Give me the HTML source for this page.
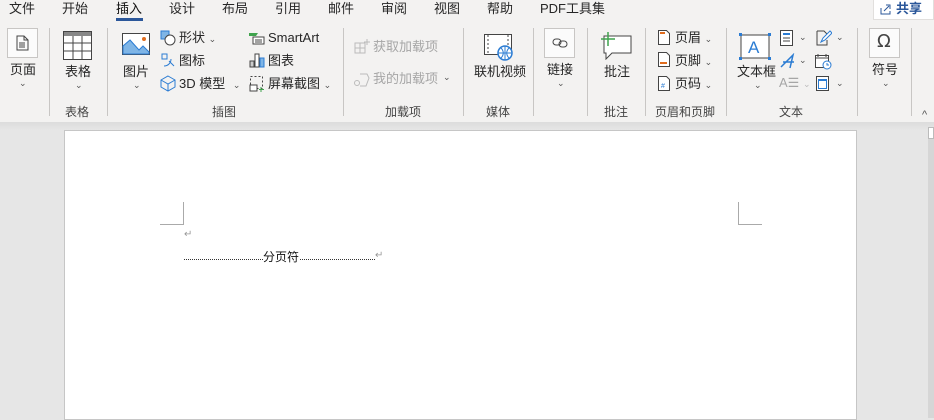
<!DOCTYPE html>
<html><head><meta charset="utf-8"><style>
*{margin:0;padding:0;box-sizing:border-box}
body{width:934px;height:418px;overflow:hidden;background:#e6e6e6;font-family:"Liberation Sans","Noto Sans CJK SC",sans-serif;color:#262626;position:relative}
.a{position:absolute;white-space:nowrap}
.t{font-size:13px;top:0;line-height:17px}
.r{font-size:12px;line-height:16px}
.sep{position:absolute;top:28px;width:1px;height:88px;background:#c8c6c4}
.gl{position:absolute;top:104px;font-size:12px;line-height:16px;color:#444}
.chev{font-size:9px;color:#555}
svg{position:absolute}
.dis{color:#a6a6a6}
</style></head><body>
<div class="a" style="left:0;top:0;width:934px;height:122px;background:#f3f2f1"></div>
<div class="a" style="left:0;top:122px;width:934px;height:8px;background:linear-gradient(#dcdcdc,#e6e6e6)"></div>
<!-- tabs -->
<div class="a t" style="left:9px">文件</div>
<div class="a t" style="left:62px">开始</div>
<div class="a t" style="left:116px;color:#111">插入</div>
<div class="a" style="left:116px;top:18px;width:27px;height:3px;background:#2b579a"></div>
<div class="a t" style="left:169px">设计</div>
<div class="a t" style="left:222px">布局</div>
<div class="a t" style="left:275px">引用</div>
<div class="a t" style="left:328px">邮件</div>
<div class="a t" style="left:381px">审阅</div>
<div class="a t" style="left:434px">视图</div>
<div class="a t" style="left:487px">帮助</div>
<div class="a t" style="left:540px">PDF工具集</div>
<div class="a" style="left:873px;top:0;width:61px;height:20px;background:#fff;border:1px solid #e1dfdd;border-top:0"></div>
<svg style="left:880px;top:3px" width="12" height="12" viewBox="0 0 12 12"><path d="M1 5v6h9V8M4 8l5-5M6 2h4v4" fill="none" stroke="#2b579a"/></svg>
<div class="a" style="left:896px;top:0;font-size:13px;line-height:17px;color:#2b579a;font-weight:bold">共享</div>
<!-- separators -->
<div class="sep" style="left:49px"></div><div class="sep" style="left:107px"></div><div class="sep" style="left:343px"></div><div class="sep" style="left:463px"></div><div class="sep" style="left:533px"></div><div class="sep" style="left:587px"></div><div class="sep" style="left:645px"></div><div class="sep" style="left:726px"></div><div class="sep" style="left:857px"></div><div class="sep" style="left:911px"></div>
<!-- 页面 -->
<div class="a" style="left:7px;top:28px;width:31px;height:30px;background:#fbfbfb;border:1px solid #c8c6c4"></div>
<svg style="left:16px;top:35px" width="13" height="16" viewBox="0 0 13 16"><path d="M1 1h7l4 4v10H1z M8 1v4h4 M3 8h6M3 10h6M3 12h6" fill="none" stroke="#444"/></svg>
<div class="a r" style="left:10px;top:62px;font-size:13px">页面</div>
<div class="a chev" style="left:19px;top:78px">⌄</div>
<!-- 表格 -->
<svg style="left:63px;top:31px" width="29" height="29" viewBox="0 0 29 29"><rect x=".5" y=".5" width="28" height="28" fill="#fff" stroke="#444"/><rect x="1" y="1" width="27" height="4" fill="#888"/><path d="M10 5v24M19 5v24M1 12h27M1 20h27" stroke="#444"/></svg>
<div class="a r" style="left:65px;top:64px;font-size:13px">表格</div>
<div class="a chev" style="left:75px;top:80px">⌄</div>
<div class="gl" style="left:65px">表格</div>
<!-- 插图 -->
<svg style="left:122px;top:33px" width="28" height="22" viewBox="0 0 28 22"><rect x=".5" y=".5" width="27" height="21" fill="#fff" stroke="#444"/><path d="M1 21V13l7-6 9 10 4-4 6 6v2z" fill="#7fb5e6" stroke="#2b7cd3"/><circle cx="22" cy="6" r="2" fill="#e06c1e"/></svg>
<div class="a r" style="left:123px;top:64px;font-size:13px">图片</div>
<div class="a chev" style="left:133px;top:80px">⌄</div>
<svg style="left:160px;top:30px" width="16" height="16" viewBox="0 0 16 16"><rect x="1" y="1" width="8" height="8" fill="#7fb5e6" stroke="#2b7cd3"/><circle cx="10" cy="10" r="5" fill="#fff" stroke="#444"/></svg>
<div class="a r" style="left:179px;top:30px;font-size:13px">形状 <span class="chev">⌄</span></div>
<svg style="left:160px;top:52px" width="16" height="16" viewBox="0 0 16 16"><path d="M2 2h5v5H2zM9 9l5 5M4 14c4 0 7-3 7-7" fill="none" stroke="#2b7cd3"/></svg>
<div class="a r" style="left:179px;top:53px;font-size:13px">图标</div>
<svg style="left:160px;top:75px" width="16" height="17" viewBox="0 0 16 17"><path d="M8 1l7 4v7l-7 4-7-4V5zM1 5l7 4 7-4M8 9v7" fill="none" stroke="#2b7cd3"/></svg>
<div class="a r" style="left:179px;top:76px;font-size:13px">3D 模型 <span class="chev" style="margin-left:4px">⌄</span></div>
<svg style="left:248px;top:31px" width="17" height="14" viewBox="0 0 17 14"><path d="M1 2h9l-2 3H1z" fill="#3fa34d"/><rect x="5" y="6" width="11" height="7" fill="#fff" stroke="#444"/><path d="M7 9h7M7 11h7" stroke="#444"/></svg>
<div class="a r" style="left:268px;top:30px;font-size:13px">SmartArt</div>
<svg style="left:249px;top:52px" width="16" height="16" viewBox="0 0 16 16"><rect x="1" y="9" width="4" height="6" fill="#ccc" stroke="#444"/><rect x="6" y="2" width="4" height="13" fill="#fff" stroke="#444"/><rect x="11" y="6" width="4" height="9" fill="#7fb5e6" stroke="#2b7cd3"/></svg>
<div class="a r" style="left:268px;top:53px;font-size:13px">图表</div>
<svg style="left:249px;top:75px" width="16" height="17" viewBox="0 0 16 17"><rect x="1.5" y="1.5" width="12" height="12" fill="none" stroke="#444" stroke-dasharray="2 2"/><rect x="1" y="10" width="7" height="6" fill="#fff" stroke="#444"/><path d="M12 12v5M10 14.5h5" stroke="#3fa34d"/></svg>
<div class="a r" style="left:268px;top:76px;font-size:13px">屏幕截图 <span class="chev">⌄</span></div>
<div class="gl" style="left:212px">插图</div>
<!-- 加载项 -->
<svg style="left:354px;top:38px" width="16" height="16" viewBox="0 0 16 16"><path d="M1 5h10v10H1zM6 5v10M1 10h10M13 1v6M10 4h6" fill="none" stroke="#bbb"/></svg>
<div class="a r dis" style="left:373px;top:39px;font-size:13px">获取加载项</div>
<svg style="left:354px;top:71px" width="16" height="16" viewBox="0 0 16 16"><circle cx="3" cy="12" r="2.5" fill="none" stroke="#bbb"/><path d="M6 3h7l2 4-3 8H6" fill="none" stroke="#bbb"/></svg>
<div class="a r dis" style="left:373px;top:71px;font-size:13px">我的加载项</div>
<div class="a chev" style="left:443px;top:72px">⌄</div>
<div class="gl" style="left:385px">加载项</div>
<!-- 媒体 -->
<svg style="left:484px;top:34px" width="30" height="28" viewBox="0 0 30 28"><rect x=".5" y=".5" width="27" height="20" fill="#fff" stroke="#444"/><path d="M4 1v19M24 1v19" stroke="#444" stroke-dasharray="2 2"/><circle cx="21" cy="19" r="7" fill="#fff" stroke="#2b7cd3" stroke-width="1.5"/><path d="M14 19h14M21 12v14M17 14c3 3 3 7 0 10M25 14c-3 3-3 7 0 10" fill="none" stroke="#2b7cd3"/></svg>
<div class="a r" style="left:474px;top:64px;font-size:13px">联机视频</div>
<div class="gl" style="left:486px">媒体</div>
<!-- 链接 -->
<div class="a" style="left:544px;top:28px;width:31px;height:30px;background:#fbfbfb;border:1px solid #c8c6c4"></div>
<svg style="left:552px;top:37px" width="16" height="12" viewBox="0 0 16 12"><rect x="1" y="2" width="8" height="6" rx="3" fill="none" stroke="#444"/><rect x="7" y="4" width="8" height="6" rx="3" fill="none" stroke="#444"/></svg>
<div class="a r" style="left:547px;top:62px;font-size:13px">链接</div>
<div class="a chev" style="left:557px;top:78px">⌄</div>
<!-- 批注 -->
<svg style="left:600px;top:31px" width="32" height="29" viewBox="0 0 32 29"><path d="M4 5h27v17H12l-6 6v-6H4z" fill="#fff" stroke="#444"/><path d="M8 1v14M1 8h14" stroke="#3fa34d" stroke-width="1.5"/></svg>
<div class="a r" style="left:604px;top:64px;font-size:13px">批注</div>
<div class="gl" style="left:604px">批注</div>
<!-- 页眉页脚 -->
<svg style="left:658px;top:30px" width="12" height="15" viewBox="0 0 12 15"><path d="M.5.5h8l3 3v11H.5z" fill="#fff" stroke="#444"/><path d="M2 3h5" stroke="#e06c1e" stroke-width="2"/></svg>
<div class="a r" style="left:675px;top:30px;font-size:13px">页眉 <span class="chev">⌄</span></div>
<svg style="left:658px;top:52px" width="12" height="15" viewBox="0 0 12 15"><path d="M.5.5h8l3 3v11H.5z" fill="#fff" stroke="#444"/><path d="M2 11h7" stroke="#e06c1e" stroke-width="2"/></svg>
<div class="a r" style="left:675px;top:53px;font-size:13px">页脚 <span class="chev">⌄</span></div>
<svg style="left:658px;top:76px" width="12" height="15" viewBox="0 0 12 15"><path d="M.5.5h8l3 3v11H.5z" fill="#fff" stroke="#444"/><text x="3" y="12" font-size="7" fill="#2b7cd3" font-family="Liberation Sans">#</text></svg>
<div class="a r" style="left:675px;top:76px;font-size:13px">页码 <span class="chev">⌄</span></div>
<div class="gl" style="left:655px">页眉和页脚</div>
<!-- 文本 -->
<svg style="left:739px;top:33px" width="32" height="27" viewBox="0 0 32 27"><rect x="2" y="2" width="28" height="23" fill="#fff" stroke="#444"/><rect x="0" y="0" width="3" height="3" fill="#2b7cd3"/><rect x="29" y="0" width="3" height="3" fill="#2b7cd3"/><rect x="0" y="24" width="3" height="3" fill="#2b7cd3"/><rect x="29" y="24" width="3" height="3" fill="#2b7cd3"/><text x="9" y="20" font-size="17" fill="#2b7cd3" font-family="Liberation Sans">A</text></svg>
<div class="a r" style="left:737px;top:64px;font-size:13px">文本框</div>
<div class="a chev" style="left:754px;top:80px">⌄</div>
<svg style="left:780px;top:30px" width="13" height="16" viewBox="0 0 13 16"><rect x=".5" y=".5" width="12" height="15" fill="#fff" stroke="#444"/><path d="M3 4h7" stroke="#2b7cd3" stroke-width="2"/><path d="M3 8h7M3 11h7" stroke="#444"/></svg>
<div class="a chev" style="left:799px;top:32px">⌄</div>
<svg style="left:780px;top:53px" width="16" height="16" viewBox="0 0 16 16"><path d="M1 14L13 2l-3 13M3 9h11" fill="none" stroke="#2b7cd3" stroke-width="1.5"/></svg>
<div class="a chev" style="left:799px;top:55px">⌄</div>
<div class="a r dis" style="left:779px;top:75px;font-size:13px">A☰ <span class="chev" style="color:#bbb">⌄</span></div>
<svg style="left:816px;top:30px" width="16" height="16" viewBox="0 0 16 16"><path d="M1 1h7l3 3M11 10v5H1V1" fill="none" stroke="#444"/><path d="M5 12l2-4 7-7 2 2-7 7z" fill="#fff" stroke="#2b7cd3"/></svg>
<div class="a chev" style="left:836px;top:32px">⌄</div>
<svg style="left:815px;top:53px" width="17" height="17" viewBox="0 0 17 17"><rect x=".5" y="2.5" width="13" height="12" fill="#fff" stroke="#444"/><path d="M3 1v3M11 1v3M1 5h12" stroke="#444"/><circle cx="12" cy="12" r="4" fill="#fff" stroke="#2b7cd3"/><path d="M12 10v2h2" fill="none" stroke="#2b7cd3"/></svg>
<svg style="left:816px;top:76px" width="13" height="15" viewBox="0 0 13 15"><rect x=".5" y=".5" width="12" height="14" fill="#fff" stroke="#444"/><rect x="2.5" y="3.5" width="8" height="9" fill="none" stroke="#2b7cd3"/><path d="M2 4h9" stroke="#2b7cd3" stroke-width="2"/></svg>
<div class="a chev" style="left:836px;top:78px">⌄</div>
<div class="gl" style="left:779px">文本</div>
<!-- 符号 -->
<div class="a" style="left:869px;top:28px;width:31px;height:30px;background:#fbfbfb;border:1px solid #c8c6c4"></div>
<div class="a" style="left:877px;top:32px;font-size:18px;line-height:20px;color:#444;font-family:'DejaVu Sans',sans-serif">Ω</div>
<div class="a r" style="left:872px;top:62px;font-size:13px">符号</div>
<div class="a chev" style="left:882px;top:78px">⌄</div>
<div class="a chev" style="left:922px;top:109px;font-size:11px">^</div>
<!-- document -->
<div class="a" style="left:64px;top:130px;width:793px;height:290px;background:#fff;border:1px solid #c6c6c6"></div>
<div class="a" style="left:928px;top:127px;width:6px;height:291px;background:#d6d6d6"></div>
<div class="a" style="left:928px;top:127px;width:6px;height:12px;background:#fff;border:1px solid #bbb"></div>
<div class="a" style="left:160px;top:202px;width:24px;height:23px;border-right:1px solid #aaa;border-bottom:1px solid #aaa"></div>
<div class="a" style="left:738px;top:202px;width:24px;height:23px;border-left:1px solid #aaa;border-bottom:1px solid #aaa"></div>
<div class="a" style="left:184px;top:229px;font-size:10px;color:#999">↵</div>
<div class="a" style="left:184px;top:259px;width:79px;border-top:1px dotted #333"></div>
<div class="a" style="left:263px;top:250px;font-size:12px;line-height:15px;color:#111">分页符</div>
<div class="a" style="left:300px;top:259px;width:75px;border-top:1px dotted #333"></div>
<div class="a" style="left:375px;top:250px;font-size:10px;color:#999">↵</div>
</body></html>
